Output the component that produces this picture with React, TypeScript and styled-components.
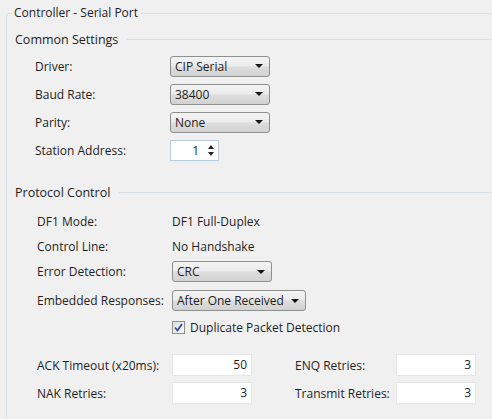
import React from "react";
import styled, { createGlobalStyle } from "styled-components";

// ---------------- Global ----------------

const GlobalStyle = createGlobalStyle`
  html, body {
    margin: 0;
    padding: 0;
    background: #f0f0f0;
    overflow: hidden;
  }
  body {
    font-family: "Open Sans", "Noto Sans", sans-serif;
    font-size: 12px;
    color: #1e1e1e;
  }
`;

// ---------------- Styled Components ----------------

const Page = styled.div`
  padding: 0 0 0 6px;
  height: 419px;
  overflow: hidden;
`;

const GroupBox = styled.fieldset`
  margin: 0 -20px 0 0;
  padding: 0 0 40px 8px;
  border: 1px solid #d5dfe5;
  border-radius: 3px;
  min-height: 420px;
`;

const Legend = styled.legend`
  padding: 0 2px;
  margin-left: -3px;
  font-size: 12px;
  line-height: 26px;
  height: 26px;
`;

const SectionHeader = styled.div<{ $top: number }>`
  display: flex;
  align-items: center;
  gap: 9px;
  height: 20px;
  margin-top: ${({ $top }) => $top}px;
`;

const SectionTitle = styled.span`
  font-size: 12.5px;
  white-space: nowrap;
`;

const Rule = styled.div`
  flex: 1;
  height: 1px;
  background: #d5dfe5;
`;

const Rows = styled.div<{ $indent: number; $top?: number }>`
  display: flex;
  flex-direction: column;
  padding-left: ${({ $indent }) => $indent}px;
  padding-top: ${({ $top }) => $top ?? 0}px;
`;

const Row = styled.div<{ $h: number }>`
  display: grid;
  grid-template-columns: 135px auto;
  align-items: center;
  height: ${({ $h }) => $h}px;
`;

const Label = styled.span`
  white-space: nowrap;
`;

const Value = styled.span`
  white-space: nowrap;
`;

const Combo = styled.div<{ $w: number }>`
  box-sizing: border-box;
  display: flex;
  align-items: center;
  justify-content: space-between;
  width: ${({ $w }) => $w}px;
  height: 21px;
  padding: 0 6px 0 4px;
  border: 1px solid #8e8f8f;
  border-radius: 3px;
  background: linear-gradient(
    to bottom,
    #f4f4f4 0%,
    #ebebeb 48%,
    #dddddd 52%,
    #d2d2d2 100%
  );
  white-space: nowrap;
  font-size: 12px;
`;

const Arrow = styled.span`
  width: 0;
  height: 0;
  border-left: 4px solid transparent;
  border-right: 4px solid transparent;
  border-top: 4px solid #111;
`;

const Spinner = styled.div`
  box-sizing: border-box;
  display: flex;
  align-items: center;
  justify-content: flex-end;
  gap: 9px;
  width: 49px;
  height: 21px;
  padding-right: 4px;
  background: #fff;
  border: 1px solid #b7cde3;
`;

const SpinButtons = styled.div`
  display: flex;
  flex-direction: column;
  gap: 3px;
`;

const Tri = styled.span<{ $up?: boolean }>`
  width: 0;
  height: 0;
  border-left: 3.5px solid transparent;
  border-right: 3.5px solid transparent;
  ${({ $up }) =>
    $up ? "border-bottom: 4px solid #222;" : "border-top: 4px solid #222;"}
`;

const CheckRow = styled.label`
  display: flex;
  align-items: center;
  gap: 5px;
  white-space: nowrap;
`;

const CheckBox = styled.span`
  box-sizing: border-box;
  display: flex;
  align-items: center;
  justify-content: center;
  width: 13px;
  height: 13px;
  border: 1px solid #8f8f8f;
  background: linear-gradient(135deg, #dcdcdc, #fdfdfd);
`;

const NumGrid = styled.div`
  display: grid;
  grid-template-columns: 135px 80px 43px 101px 80px;
  grid-auto-rows: 28px;
  align-items: center;
  padding-left: 22px;
  margin-top: 14px;
`;

const NumLabel = styled.span<{ $col: number }>`
  grid-column: ${({ $col }) => $col};
  white-space: nowrap;
`;

const NumInput = styled.div<{ $col: number }>`
  grid-column: ${({ $col }) => $col};
  box-sizing: border-box;
  height: 22px;
  line-height: 20px;
  padding-right: 4px;
  text-align: right;
  background: #fff;
  border: 1px solid #e6e6e6;
  font-size: 12px;
`;

// ---------------- Component ----------------

const App: React.FC = () => {
  return (
    <>
      <GlobalStyle />
      <Page>
        <GroupBox>
          <Legend>Controller - Serial Port</Legend>

          <SectionHeader $top={3}>
            <SectionTitle>Common Settings</SectionTitle>
            <Rule />
          </SectionHeader>
          <Rows $indent={20} $top={3}>
            <Row $h={28}>
              <Label>Driver:</Label>
              <Combo $w={100}>
                CIP Serial
                <Arrow />
              </Combo>
            </Row>
            <Row $h={28}>
              <Label>Baud Rate:</Label>
              <Combo $w={100}>
                38400
                <Arrow />
              </Combo>
            </Row>
            <Row $h={28}>
              <Label>Parity:</Label>
              <Combo $w={100}>
                None
                <Arrow />
              </Combo>
            </Row>
            <Row $h={28}>
              <Label>Station Address:</Label>
              <Spinner>
                1
                <SpinButtons>
                  <Tri $up />
                  <Tri />
                </SpinButtons>
              </Spinner>
            </Row>
          </Rows>

          <SectionHeader $top={18}>
            <SectionTitle>Protocol Control</SectionTitle>
            <Rule />
          </SectionHeader>
          <Rows $indent={22} $top={6}>
            <Row $h={26}>
              <Label>DF1 Mode:</Label>
              <Value>DF1 Full-Duplex</Value>
            </Row>
            <Row $h={25}>
              <Label>Control Line:</Label>
              <Value>No Handshake</Value>
            </Row>
            <Row $h={25}>
              <Label>Error Detection:</Label>
              <Combo $w={100}>
                CRC
                <Arrow />
              </Combo>
            </Row>
            <Row $h={33}>
              <Label>Embedded Responses:</Label>
              <Combo $w={134}>
                After One Received
                <Arrow />
              </Combo>
            </Row>
            <Row $h={20}>
              <span />
              <CheckRow>
                <CheckBox>
                  <svg width="9" height="9" viewBox="0 0 9 9">
                    <path
                      d="M1 4.5 L3.5 7.5 L8 1"
                      fill="none"
                      stroke="#3a4a9c"
                      strokeWidth="1.8"
                    />
                  </svg>
                </CheckBox>
                Duplicate Packet Detection
              </CheckRow>
            </Row>
          </Rows>

          <NumGrid>
            <NumLabel $col={1}>ACK Timeout (x20ms):</NumLabel>
            <NumInput $col={2}>50</NumInput>
            <NumLabel $col={4}>ENQ Retries:</NumLabel>
            <NumInput $col={5}>3</NumInput>
            <NumLabel $col={1}>NAK Retries:</NumLabel>
            <NumInput $col={2}>3</NumInput>
            <NumLabel $col={4}>Transmit Retries:</NumLabel>
            <NumInput $col={5}>3</NumInput>
          </NumGrid>
        </GroupBox>
      </Page>
    </>
  );
};

export default App;
